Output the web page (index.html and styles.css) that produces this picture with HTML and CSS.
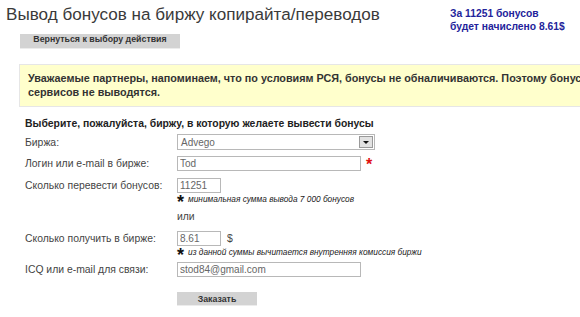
FILE: index.html
```html
<!DOCTYPE html>
<html lang="ru">
<head>
    <meta charset="UTF-8">
    <meta name="viewport" content="width=device-width, initial-scale=1.0">
    <title>Вывод бонусов</title>
    <link rel="stylesheet" href="styles.css">
</head>
<body>

    <div class="top">
        <h1 class="title">Вывод бонусов на биржу копирайта/переводов</h1>
        <div class="sum">За 11251 бонусов<br>будет начислено 8.61$</div>
    </div>

    <a class="btn back" href="#">Вернуться к выбору действия</a>

    <div class="notice">
        Уважаемые партнеры, напоминаем, что по условиям РСЯ, бонусы не обналичиваются. Поэтому бонусы с других<br>
        сервисов не выводятся.
    </div>

    <form class="form" onsubmit="return false">
        <h2 class="form-title">Выберите, пожалуйста, биржу, в которую желаете вывести бонусы</h2>

        <div class="row r-select">
            <label>Биржа:</label>
            <div class="select"><span class="select-val">Advego</span><span class="arrow"></span></div>
        </div>

        <div class="row r-login">
            <label>Логин или e-mail в бирже:</label>
            <input class="field wide" value="Tod">
            <span class="req">*</span>
        </div>

        <div class="row r-bonus">
            <label>Сколько перевести бонусов:</label>
            <input class="field short" value="11251">
        </div>
        <div class="note"><span class="star">*</span>минимальная сумма вывода 7 000 бонусов</div>

        <div class="or">или</div>

        <div class="row r-money">
            <label>Сколько получить в бирже:</label>
            <input class="field short" value="8.61">
            <span class="cur">$</span>
        </div>
        <div class="note"><span class="star">*</span>из данной суммы вычитается внутренняя комиссия биржи</div>

        <div class="row r-icq">
            <label>ICQ или e-mail для связи:</label>
            <input class="field wide" value="stod84@gmail.com">
        </div>

        <button class="btn order" type="submit">Заказать</button>
    </form>

</body>
</html>
```

FILE: styles.css
```css
html, body {
    overflow-x: hidden;
}
body {
    margin: 0;
    font-family: "Liberation Sans", Arial, sans-serif;
    color: #333;
    background: #fff;
}
.top {
    display: grid;
    grid-template-columns: 444px auto;
    align-items: start;
    padding: 3px 0 0 6px;
}
.title {
    margin: 0;
    font-size: 17.1px;
    line-height: 24px;
    font-weight: normal;
    color: #3a3a3a;
    white-space: nowrap;
}
.sum {
    margin-top: 4px;
    font-size: 10.3px;
    line-height: 13px;
    font-weight: bold;
    color: #23239b;
    white-space: nowrap;
}
.btn {
    display: block;
    height: 14px;
    line-height: 14px;
    padding: 0;
    background: #d3d3d3;
    border: none;
    border-bottom: 1px solid #ececec;
    color: #333;
    font: bold 8.8px "Liberation Sans", Arial, sans-serif;
    text-align: center;
    text-decoration: none;
    white-space: nowrap;
    cursor: pointer;
}
.back {
    width: 160px;
    margin: 1px 0 0 20px;
}
.notice {
    width: 800px;
    margin: 15px 0 0 19px;
    padding: 6px 0 7px 8px;
    background: #ffffcc;
    border: 1px solid #e6e6e6;
    font-size: 10.8px;
    line-height: 14px;
    font-weight: bold;
    color: #333;
    white-space: nowrap;
}
.form {
    margin: 10px 0 0;
    padding-left: 25px;
}
.form-title {
    margin: 0;
    font-size: 10.4px;
    line-height: 14px;
    font-weight: bold;
    color: #222;
}
.row {
    display: flex;
    align-items: center;
    height: 16px;
}
.row label {
    width: 152px;
    flex-shrink: 0;
    font-size: 10.4px;
    color: #444;
    white-space: nowrap;
}
.r-select { margin-top: 3px; }
.r-login { margin-top: 5px; }
.r-bonus { margin-top: 6px; }
.r-money { margin-top: 6px; }
.r-icq { margin-top: 4px; }

.field {
    box-sizing: border-box;
    height: 15px;
    margin: 0;
    padding: 0 2px;
    border: 1px solid #b8b8b8;
    font: 10px "Liberation Sans", Arial, sans-serif;
    color: #666;
    background: #fff;
}
.wide { width: 184px; }
.short { width: 44px; }

.select {
    box-sizing: border-box;
    display: flex;
    align-items: center;
    justify-content: space-between;
    width: 198px;
    height: 16px;
    padding: 0 1px 0 3px;
    border: 1px solid #b8b8b8;
    font-size: 10px;
    color: #666;
}
.arrow {
    position: relative;
    box-sizing: border-box;
    width: 14px;
    height: 12px;
    background: #e2e2e2;
    border: 1px solid #9a9a9a;
}
.arrow::after {
    content: "";
    position: absolute;
    left: 3px;
    top: 4px;
    border-left: 3px solid transparent;
    border-right: 3px solid transparent;
    border-top: 3px solid #111;
}
.req {
    margin-left: 5px;
    color: #e01010;
    font-weight: bold;
    font-size: 16px;
    line-height: 16px;
    padding-top: 4px;
}
.cur {
    margin-left: 6px;
    font-size: 10.4px;
    color: #444;
}
.note {
    display: flex;
    align-items: center;
    height: 10px;
    margin: 1px 0 0 152px;
    font-size: 8.3px;
    font-style: italic;
    color: #222;
    white-space: nowrap;
}
.star {
    margin-right: 4px;
    font-size: 18px;
    font-style: normal;
    font-weight: bold;
    line-height: 10px;
    padding-top: 6px;
    color: #111;
}
.or {
    margin: 6px 0 0 152px;
    font-size: 10.4px;
    line-height: 14px;
    color: #444;
}
.order {
    width: 80px;
    margin: 15px 0 0 152px;
}
```
